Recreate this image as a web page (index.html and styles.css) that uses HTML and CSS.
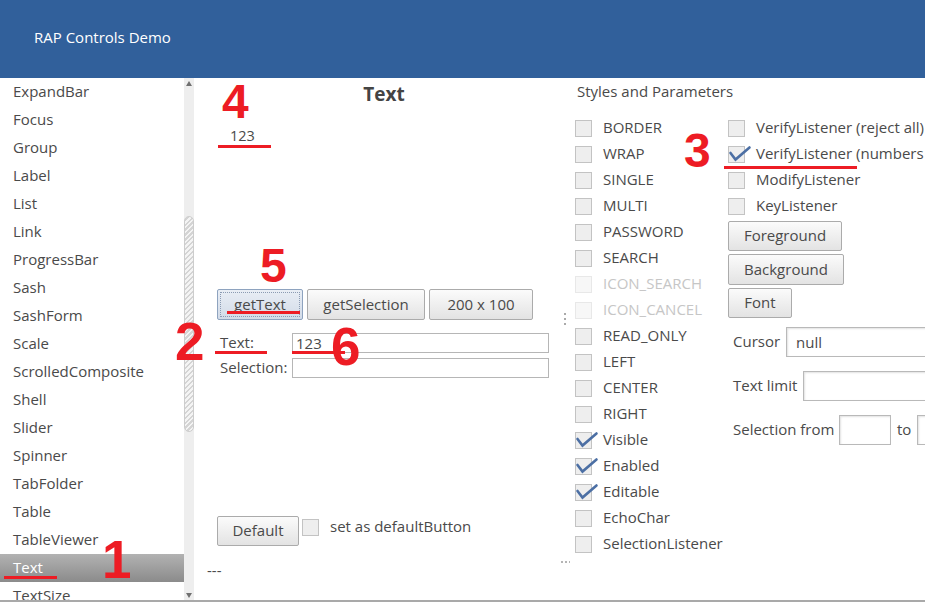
FILE: index.html
```html
<!DOCTYPE html>
<html>
<head>
<meta charset="utf-8">
<link rel="stylesheet" href="styles.css">
</head>
<body>
<div class="app">
  <header class="top"><span class="brand">RAP Controls Demo</span></header>
  <div class="main">
    <nav class="nav">
      <ul class="list">
        <li>ExpandBar</li>
        <li>Focus</li>
        <li>Group</li>
        <li>Label</li>
        <li>List</li>
        <li>Link</li>
        <li>ProgressBar</li>
        <li>Sash</li>
        <li>SashForm</li>
        <li>Scale</li>
        <li>ScrolledComposite</li>
        <li>Shell</li>
        <li>Slider</li>
        <li>Spinner</li>
        <li>TabFolder</li>
        <li>Table</li>
        <li>TableViewer</li>
        <li class="sel">Text</li>
        <li>TextSize</li>
      </ul>
      <div class="vscroll">
        <div class="arrow up"></div>
        <div class="track"><div class="thumb"></div></div>
        <div class="arrow down"></div>
      </div>
    </nav>

    <section class="center">
      <div class="title">Text</div>
      <div class="demo"><div class="demo-text">123</div></div>
      <div class="btnrow">
        <button class="btn focus w85">getText</button>
        <button class="btn w118">getSelection</button>
        <button class="btn w104">200 x 100</button>
      </div>
      <div class="form">
        <div class="frow"><span class="flabel">Text:</span><input class="field" value="123"></div>
        <div class="frow r2"><span class="flabel">Selection:</span><input class="field" value=""></div>
      </div>
      <div class="defrow">
        <button class="btn wdef">Default</button>
        <span class="box"></span>
        <span class="deflabel">set as defaultButton</span>
      </div>
      <div class="dashes">---</div>
    </section>

    <div class="sash"><span class="vdots"></span><span class="hdots"></span></div>

    <section class="params">
      <div class="phead">Styles and Parameters</div>
      <div class="pcols">
        <div class="col1">
          <div class="cb"><span class="box"></span><span class="cbl">BORDER</span></div>
          <div class="cb"><span class="box"></span><span class="cbl">WRAP</span></div>
          <div class="cb"><span class="box"></span><span class="cbl">SINGLE</span></div>
          <div class="cb"><span class="box"></span><span class="cbl">MULTI</span></div>
          <div class="cb"><span class="box"></span><span class="cbl">PASSWORD</span></div>
          <div class="cb"><span class="box"></span><span class="cbl">SEARCH</span></div>
          <div class="cb dis"><span class="box"></span><span class="cbl">ICON_SEARCH</span></div>
          <div class="cb dis"><span class="box"></span><span class="cbl">ICON_CANCEL</span></div>
          <div class="cb"><span class="box"></span><span class="cbl">READ_ONLY</span></div>
          <div class="cb"><span class="box"></span><span class="cbl">LEFT</span></div>
          <div class="cb"><span class="box"></span><span class="cbl">CENTER</span></div>
          <div class="cb"><span class="box"></span><span class="cbl">RIGHT</span></div>
          <div class="cb on"><span class="box"><svg class="tick" viewBox="0 0 22 16" width="22" height="16"><path d="M1.5 7 L6.5 13.5 L20.5 1.5" /></svg></span><span class="cbl">Visible</span></div>
          <div class="cb on"><span class="box"><svg class="tick" viewBox="0 0 22 16" width="22" height="16"><path d="M1.5 7 L6.5 13.5 L20.5 1.5" /></svg></span><span class="cbl">Enabled</span></div>
          <div class="cb on"><span class="box"><svg class="tick" viewBox="0 0 22 16" width="22" height="16"><path d="M1.5 7 L6.5 13.5 L20.5 1.5" /></svg></span><span class="cbl">Editable</span></div>
          <div class="cb"><span class="box"></span><span class="cbl">EchoChar</span></div>
          <div class="cb"><span class="box"></span><span class="cbl">SelectionListener</span></div>
        </div>
        <div class="col2">
          <div class="cb"><span class="box"></span><span class="cbl">VerifyListener (reject all)</span></div>
          <div class="cb on"><span class="box"><svg class="tick" viewBox="0 0 22 16" width="22" height="16"><path d="M1.5 7 L6.5 13.5 L20.5 1.5" /></svg></span><span class="cbl">VerifyListener (numbers only)</span></div>
          <div class="cb"><span class="box"></span><span class="cbl">ModifyListener</span></div>
          <div class="cb"><span class="box"></span><span class="cbl">KeyListener</span></div>
          <button class="btn wfg">Foreground</button>
          <button class="btn wbg">Background</button>
          <button class="btn wfont">Font</button>
          <div class="prow first"><span class="plabel lc">Cursor</span><input class="pfield wide" value="null"></div>
          <div class="prow"><span class="plabel lt">Text limit</span><input class="pfield wide" value=""></div>
          <div class="prow"><span class="plabel ls">Selection from</span><input class="pfield small" value=""><span class="to">to</span><input class="pfield small" value=""></div>
        </div>
      </div>
    </section>
  </div>

  <div class="mark d4">4</div>
  <div class="mark d5">5</div>
  <div class="mark big d2">2</div>
  <div class="mark big d6">6</div>
  <div class="mark d3">3</div>
  <div class="mark big d1">1</div>
  <div class="uline u1"></div>
  <div class="uline u2"></div>
  <div class="uline u3"></div>
  <div class="uline u4"></div>
  <div class="uline u5"></div>
  <div class="uline u6"></div>
</div>
</body>
</html>
```
FILE: styles.css
```css
html, body {
  margin: 0;
  padding: 0;
  background: #fff;
}
body {
  font-family: "Open Sans", "DejaVu Sans", sans-serif;
  font-size: 15px;
  color: #4a4a4a;
}
.app {
  position: relative;
  width: 925px;
  height: 603px;
  overflow: hidden;
  background: #fff;
}
.top {
  height: 78px;
  box-sizing: border-box;
  background: #31609b;
  color: #fff;
  padding: 26px 0 0 34px;
  line-height: 22px;
}
.main {
  display: flex;
  height: 522px;
  border-bottom: 2px solid #a9a9a9;
  overflow: hidden;
}

/* navigation list */
.nav {
  display: flex;
  width: 195px;
  flex: none;
}
.list {
  list-style: none;
  margin: 0;
  padding: 0;
  width: 184px;
  height: 522px;
  overflow: hidden;
}
.list li {
  height: 28px;
  box-sizing: border-box;
  line-height: 26px;
  padding: 0 0 2px 13px;
  white-space: nowrap;
}
.list li.sel {
  background: linear-gradient(#b2b2b2, #8b8b8b);
  color: #fff;
}
.vscroll {
  width: 10px;
  background: #eeeeee;
  display: flex;
  flex-direction: column;
}
.arrow {
  height: 10px;
  display: flex;
  align-items: center;
  justify-content: center;
}
.arrow::before {
  content: "";
  border-left: 3px solid transparent;
  border-right: 3px solid transparent;
}
.arrow.up::before { border-bottom: 5px solid #707070; }
.arrow.down::before { border-top: 5px solid #707070; }
.track { flex: 1; }
.thumb {
  margin-top: 128px;
  height: 214px;
  border: 1px solid #cdcdcd;
  border-radius: 5px;
  background: repeating-linear-gradient(-45deg, #d4d4d4 0 1.5px, #f4f4f4 1.5px 3.5px);
}

/* center */
.center {
  width: 365px;
  flex: none;
}
.title {
  margin-top: 6px;
  height: 20px;
  line-height: 20px;
  padding-left: 13px;
  text-align: center;
  font-weight: 700;
  font-size: 19px;
  color: #444;
}
.demo {
  height: 185px;
}
.demo-text {
  padding: 22px 0 0 35px;
  line-height: 20px;
  font-size: 14.5px;
}
.btnrow {
  display: flex;
  gap: 4px;
  padding-left: 22px;
  height: 31px;
}
.btn {
  font-family: inherit;
  font-size: 15px;
  color: #4a4a4a;
  background: linear-gradient(#fbfbfb, #e3e3e3);
  border: 1px solid #ababab;
  border-radius: 2px;
  padding: 0 0 2px 0;
  height: 31px;
  box-sizing: border-box;
  display: block;
}
.btn.focus {
  background: linear-gradient(#e9eef5, #d2dbe8);
  border-color: #8ea3bf;
  outline: 1px dotted #8b9bb3;
  outline-offset: -4px;
}
.w85 { width: 86px; }
.w118 { width: 118px; }
.w104 { width: 104px; }

.form {
  margin-top: 13px;
  padding-left: 22px;
}
.frow {
  display: flex;
  align-items: center;
  height: 20px;
}
.frow.r2 { margin-top: 5px; }
.flabel {
  width: 72px;
  padding-left: 3px;
  margin-top: -2px;
}
.field {
  width: 257px;
  height: 20px;
  box-sizing: border-box;
  border: 1px solid #b6b6b6;
  font-family: inherit;
  font-size: 15px;
  color: #4a4a4a;
  padding: 0 3px 1px 3px;
  margin: 0;
  background: #fff;
}
.defrow {
  display: flex;
  align-items: flex-start;
  margin-top: 138px;
  padding-left: 22px;
  height: 30px;
}
.wdef { width: 82px; height: 30px; }
.defrow .box {
  margin: 3px 0 0 3px;
}
.deflabel {
  margin-left: 11px;
  line-height: 20px;
}
.dashes {
  margin-top: 14px;
  padding-left: 12px;
  line-height: 20px;
}

/* sash */
.sash {
  width: 10px;
  flex: none;
  display: flex;
  flex-direction: column;
}
.vdots {
  margin: 235px 0 0 4px;
  width: 2px;
  height: 12px;
  background: repeating-linear-gradient(#aaaaaa 0 2px, transparent 2px 5px);
}
.hdots {
  margin: 236px 0 0 1px;
  width: 9px;
  height: 2px;
  background: repeating-linear-gradient(90deg, #b5b5b5 0 2px, transparent 2px 4px);
}

/* params */
.params {
  flex: 1;
  min-width: 0;
  white-space: nowrap;
}
.phead {
  margin-top: 3px;
  padding-left: 7px;
  line-height: 20px;
}
.pcols {
  display: flex;
  margin-top: 14px;
}
.col1 {
  width: 153px;
  padding-left: 5px;
  flex: none;
}
.col2 {
  flex: none;
  display: flex;
  flex-direction: column;
  align-items: flex-start;
}
.cb {
  display: flex;
  align-items: center;
  height: 26px;
}
.box {
  position: relative;
  flex: none;
  width: 17px;
  height: 17px;
  box-sizing: border-box;
  border: 1px solid #c3c3c3;
  background: #eeeeee;
}
.cbl { margin: -2px 0 0 11px; }
.cb.dis .box { background: #f7f7f7; border-color: #e8e8e8; }
.cb.dis .cbl { color: #c6c6c6; }
.tick {
  position: absolute;
  left: 0;
  top: -1px;
  overflow: visible;
}
.tick path {
  fill: none;
  stroke: #4c6fa4;
  stroke-width: 2.6;
  stroke-linecap: round;
  stroke-linejoin: miter;
}
.wfg { width: 114px; height: 30px; margin-top: 2px; }
.wbg { width: 116px; height: 31px; margin-top: 3px; }
.wfont { width: 64px; height: 30px; margin-top: 3px; }
.prow {
  display: flex;
  align-items: center;
  height: 30px;
  margin-top: 14px;
}
.prow.first { margin-top: 9px; }
.plabel {
  padding-left: 5px;
  box-sizing: border-box;
  margin-top: -2px;
}
.lc { width: 58px; }
.lt { width: 75px; }
.ls { width: 111px; }
.pfield {
  height: 30px;
  box-sizing: border-box;
  border: 1px solid #b9b9b9;
  box-shadow: inset 1px 1px 2px #e2e2e2;
  font-family: inherit;
  font-size: 15px;
  color: #4a4a4a;
  padding: 0 9px;
  margin: 0;
  background: #fff;
}
.pfield.wide { width: 160px; }
.pfield.small { width: 52px; }
.to { margin: -2px 6px 0 6px; }

/* red annotations */
.mark {
  position: absolute;
  font-family: "Liberation Sans", Arial, sans-serif;
  font-weight: 700;
  font-size: 48px;
  line-height: 48px;
  color: #ed1c24;
}
.mark.big { font-size: 53px; line-height: 53px; }
.d4 { left: 222px; top: 78px; }
.d5 { left: 260px; top: 242px; }
.d3 { left: 684px; top: 127px; }
.d2 { left: 175px; top: 315px; }
.d6 { left: 331px; top: 320px; }
.d1 { left: 102px; top: 533px; }
.uline {
  position: absolute;
  height: 3px;
  background: #ed1c24;
}
.u1 { left: 218px; top: 145px; width: 53px; }
.u2 { left: 227px; top: 311px; width: 73px; }
.u3 { left: 215px; top: 351px; width: 52px; }
.u4 { left: 292px; top: 351px; width: 53px; }
.u5 { left: 724px; top: 166px; width: 133px; }
.u6 { left: 4px; top: 576px; width: 53px; }
```
